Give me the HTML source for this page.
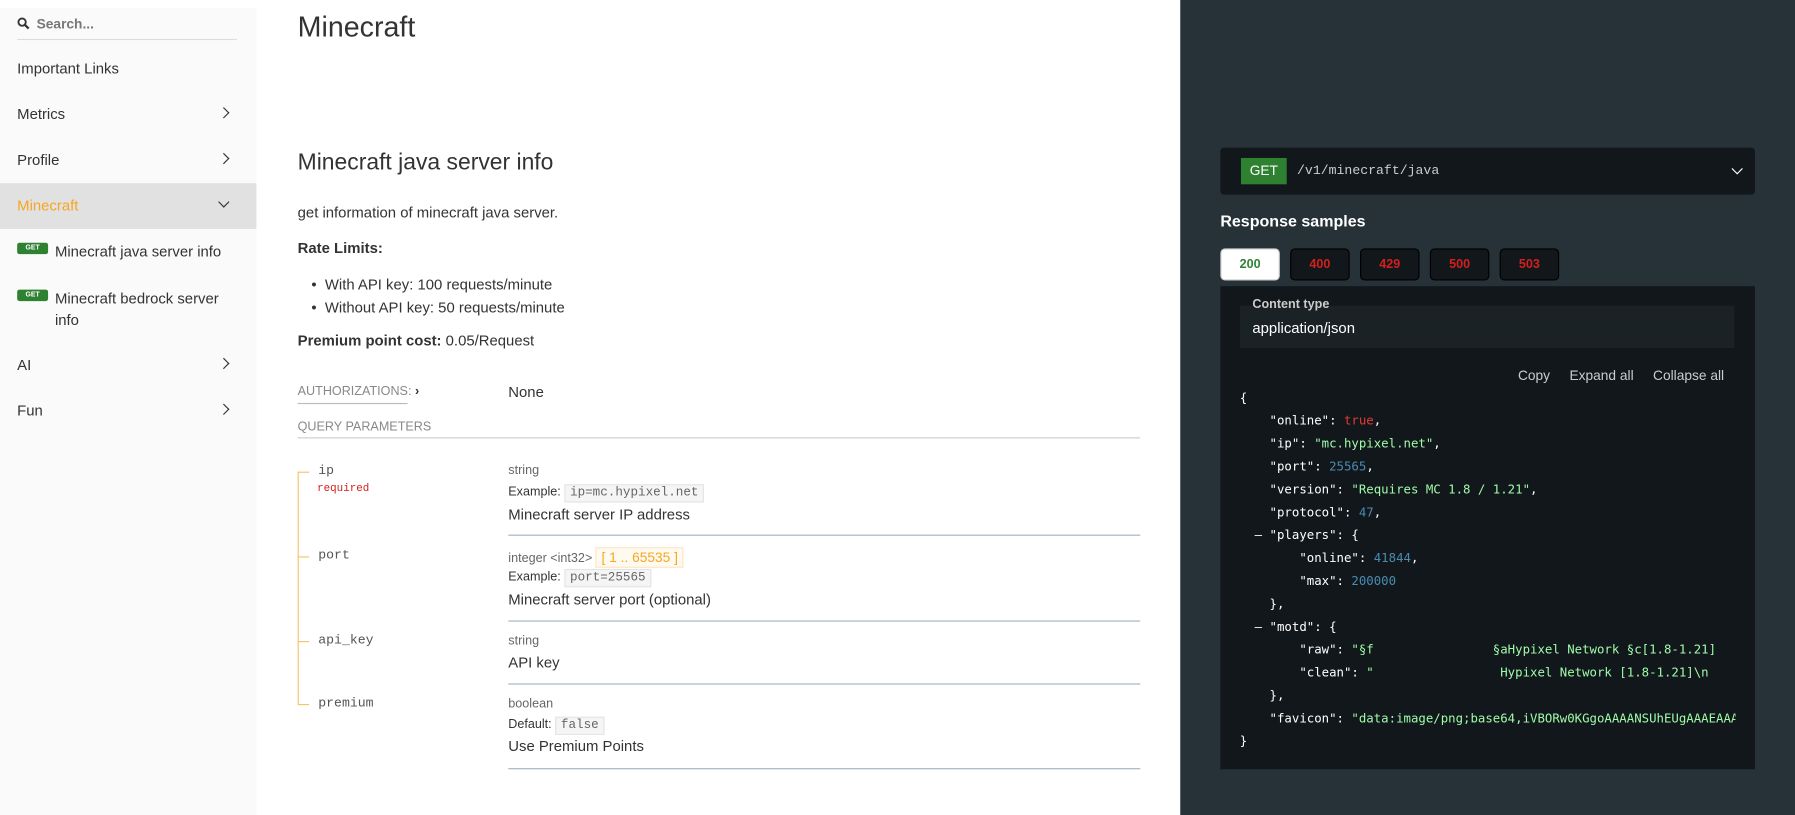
<!DOCTYPE html>
<html><head><meta charset="utf-8"><style>
html,body{margin:0;padding:0;width:1795px;height:815px;overflow:hidden;background:#fff}
#w{position:absolute;left:0;top:0;width:1568px;height:712px;transform:scale(1.14477);transform-origin:0 0;font-family:"Liberation Sans",sans-serif;color:#333}
.a{position:absolute;white-space:nowrap}
#sb{position:absolute;left:0;top:7px;width:224px;height:705px;background:#fafafa}
.nav{position:absolute;left:15px;font-size:13px;color:#333;line-height:16px}
.chev{position:absolute;left:192px;width:6px;height:6px;border-right:1.6px solid #333;border-bottom:1.6px solid #333;transform:rotate(-45deg)}
.get{position:absolute;left:15px;width:27px;height:10px;background:#2f8132;color:#fff;font-size:6px;font-weight:bold;text-align:center;line-height:10px;border-radius:2px}
.mono{font-family:"Liberation Mono","DejaVu Sans Mono",monospace}
.hr{position:absolute;height:1px;background:#9fb4be}
.code{font-family:"DejaVu Sans Mono",monospace;font-size:10.8px;color:#fff;position:absolute;left:1083px;white-space:pre;line-height:20px}
.s{color:#a0fbaa}.n{color:#4a8bb3}.b{color:#e53935}
.tab{position:absolute;top:217px;width:50px;height:26px;border:1px solid #000;background:#11171a;border-radius:4px;color:#d41f1c;font-size:11px;font-weight:bold;text-align:center;line-height:26px}
</style></head><body><div id="w">
<div id="sb">
<svg class="a" style="left:15px;top:8px" width="11" height="11" viewBox="0 0 11 11"><circle cx="4.3" cy="4.3" r="3.2" fill="none" stroke="#333" stroke-width="1.6"/><path d="M6.6 6.6 L10 10" stroke="#333" stroke-width="2"/></svg>
<div class="a" style="left:32px;top:7px;font-size:12px;font-weight:bold;color:#777">Search...</div>
<div class="a" style="left:15px;top:27px;width:192px;height:1px;background:#ddd"></div>
<div class="nav" style="top:45px">Important Links</div>
<div class="nav" style="top:85px">Metrics</div><div class="chev" style="top:88px"></div>
<div class="nav" style="top:125px">Profile</div><div class="chev" style="top:128px"></div>
<div class="a" style="left:0;top:153px;width:224px;height:40px;background:#e1e1e1"></div>
<div class="nav" style="top:165px;color:#f5a623">Minecraft</div><div class="chev" style="top:166px;transform:rotate(45deg)"></div>
<div class="get" style="top:205px">GET</div><div class="nav" style="left:48px;top:205px">Minecraft java server info</div>
<div class="get" style="top:246px">GET</div><div class="nav" style="left:48px;top:244px;line-height:19px">Minecraft bedrock server<br>info</div>
<div class="nav" style="top:304px">AI</div><div class="chev" style="top:307px"></div>
<div class="nav" style="top:344px">Fun</div><div class="chev" style="top:347px"></div>
</div>
<div class="a" style="left:260px;top:10px;font-size:25px;font-weight:300;color:#333">Minecraft</div>
<div class="a" style="left:260px;top:131px;font-size:20px;font-weight:300;color:#333">Minecraft java server info</div>
<div class="a" style="left:260px;top:178px;font-size:13px">get information of minecraft java server.</div>
<div class="a" style="left:260px;top:209px;font-size:13px;font-weight:bold">Rate Limits:</div>
<div class="a" style="left:272px;top:239px;font-size:13px;line-height:20px">• &nbsp;With API key: 100 requests/minute<br>• &nbsp;Without API key: 50 requests/minute</div>
<div class="a" style="left:260px;top:290px;font-size:13px"><b>Premium point cost:</b> 0.05/Request</div>
<div class="a" style="left:260px;top:336px;font-size:11px;color:#888">AUTHORIZATIONS: <span style="color:#333;font-weight:bold">›</span></div>
<div class="a" style="left:260px;top:352px;width:96px;height:1px;background:#bbb"></div>
<div class="a" style="left:444px;top:335px;font-size:13px">None</div>
<div class="a" style="left:260px;top:367px;font-size:11px;color:#888">QUERY PARAMETERS</div>
<div class="a" style="left:260px;top:382px;width:736px;height:1px;background:#ccc"></div>
<div class="a" style="left:260px;top:412px;width:1px;height:203px;background:#f5c16c"></div>
<div class="a" style="left:260px;top:412px;width:10px;height:1px;background:#f5c16c"></div>
<div class="a" style="left:260px;top:486px;width:10px;height:1px;background:#f5c16c"></div>
<div class="a" style="left:260px;top:560px;width:10px;height:1px;background:#f5c16c"></div>
<div class="a" style="left:260px;top:615px;width:10px;height:1px;background:#f5c16c"></div>
<div class="a mono" style="left:278px;top:405px;font-size:11.5px;color:#555">ip</div>
<div class="a mono" style="left:277px;top:421px;font-size:9.5px;color:#d41f1c">required</div>
<div class="a mono" style="left:278px;top:479px;font-size:11.5px;color:#555">port</div>
<div class="a mono" style="left:278px;top:553px;font-size:11.5px;color:#555">api_key</div>
<div class="a mono" style="left:278px;top:608px;font-size:11.5px;color:#555">premium</div>
<div class="a" style="left:444px;top:405px;font-size:11px;color:#666">string</div>
<div class="a" style="left:444px;top:424px;font-size:11px">Example: <span class="mono" style="background:#f5f5f5;border:1px solid #e4e4e4;padding:1px 4px;color:#666">ip=mc.hypixel.net</span></div>
<div class="a" style="left:444px;top:442px;font-size:13px">Minecraft server IP address</div>
<div class="hr" style="left:444px;top:467px;width:552px"></div>
<div class="a" style="left:444px;top:480px;font-size:11px;color:#666">integer &lt;int32&gt; <span style="color:#f5a623;border:1px solid #fce6c0;background:#fffaf0;padding:1px 4px;font-size:12px">[ 1 .. 65535 ]</span></div>
<div class="a" style="left:444px;top:498px;font-size:11px">Example: <span class="mono" style="background:#f5f5f5;border:1px solid #e4e4e4;padding:1px 4px;color:#666">port=25565</span></div>
<div class="a" style="left:444px;top:516px;font-size:13px">Minecraft server port (optional)</div>
<div class="hr" style="left:444px;top:542px;width:552px"></div>
<div class="a" style="left:444px;top:554px;font-size:11px;color:#666">string</div>
<div class="a" style="left:444px;top:571px;font-size:13px">API key</div>
<div class="hr" style="left:444px;top:597px;width:552px"></div>
<div class="a" style="left:444px;top:609px;font-size:11px;color:#666">boolean</div>
<div class="a" style="left:444px;top:627px;font-size:11px">Default: <span class="mono" style="background:#f5f5f5;border:1px solid #e4e4e4;padding:1px 4px;color:#666">false</span></div>
<div class="a" style="left:444px;top:644px;font-size:13px">Use Premium Points</div>
<div class="hr" style="left:444px;top:671px;width:552px"></div>
<div class="a" style="left:1031px;top:0;width:537px;height:712px;background:#263238"></div>
<div class="a" style="left:1066px;top:129px;width:467px;height:41px;background:#11171a;border-radius:3px"></div>
<div class="a" style="left:1084px;top:138px;width:40px;height:23px;background:#2f8132;color:#fff;font-size:12px;text-align:center;line-height:23px">GET</div>
<div class="a mono" style="left:1133px;top:143px;font-size:11.5px;color:#ccc">/v1/minecraft/java</div>
<div class="a" style="left:1514px;top:144px;width:6px;height:6px;border-right:1.6px solid #fff;border-bottom:1.6px solid #fff;transform:rotate(45deg)"></div>
<div class="a" style="left:1066px;top:185px;font-size:14px;font-weight:bold;color:#fff">Response samples</div>
<div class="tab" style="left:1066px;background:#fff;color:#2f8132;border-color:#ccc">200</div>
<div class="tab" style="left:1127px">400</div>
<div class="tab" style="left:1188px">429</div>
<div class="tab" style="left:1249px">500</div>
<div class="tab" style="left:1310px">503</div>
<div class="a" style="left:1066px;top:250px;width:467px;height:422px;background:#11171a"></div>
<div class="a" style="left:1083px;top:267px;width:432px;height:37px;background:#1b2225"></div>
<div class="a" style="left:1094px;top:260px;font-size:11px;font-weight:bold;color:#ccc">Content type</div>
<div class="a" style="left:1094px;top:279px;font-size:13px;color:#fff">application/json</div>
<div class="a" style="left:1326px;top:321px;font-size:12px;color:#ccc">Copy</div>
<div class="a" style="left:1371px;top:321px;font-size:12px;color:#ccc">Expand all</div>
<div class="a" style="left:1444px;top:321px;font-size:12px;color:#ccc">Collapse all</div>
<div class="code" style="top:338px;width:433px;overflow:hidden">{
    "online": <span class="b">true</span>,
    "ip": <span class="s">"mc.hypixel.net"</span>,
    "port": <span class="n">25565</span>,
    "version": <span class="s">"Requires MC 1.8 / 1.21"</span>,
    "protocol": <span class="n">47</span>,
  – "players": {
        "online": <span class="n">41844</span>,
        "max": <span class="n">200000</span>
    },
  – "motd": {
        "raw": <span class="s">"§f                §aHypixel Network §c[1.8-1.21]</span>
        "clean": <span class="s">"                 Hypixel Network [1.8-1.21]\n</span>
    },
    "favicon": <span class="s">"data:image/png;base64,iVBORw0KGgoAAAANSUhEUgAAAEAAAA</span>
}</div>
</div></body></html>
